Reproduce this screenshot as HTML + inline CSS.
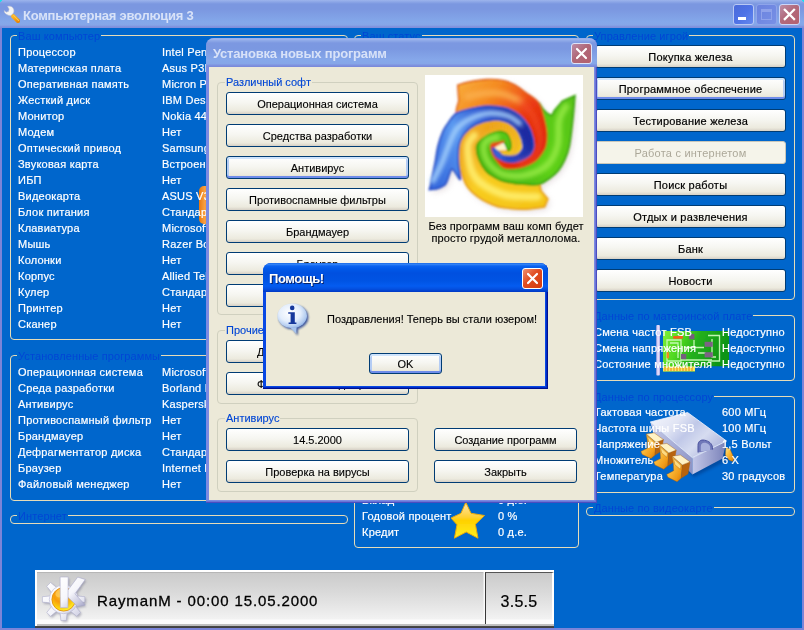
<!DOCTYPE html>
<html lang="ru">
<head>
<meta charset="utf-8">
<title>Компьютерная эволюция 3</title>
<style>
*{box-sizing:border-box;margin:0;padding:0}
html,body{width:804px;height:630px;overflow:hidden;background:#0066cc}
body{font-family:"Liberation Sans",sans-serif;font-size:11px;color:#000;position:relative}
.abs{position:absolute}
/* main window */
#main{will-change:transform;position:absolute;left:0;top:0;width:804px;height:630px;background:#7b84d8;overflow:hidden}
#mtitle{position:absolute;left:0;top:0;width:804px;height:28px;
 background:linear-gradient(#9db4ec 0,#8ba5e6 2px,#7b97e0 4px,#7b97e0 9px,#84a8ea 22px,#86a6e8 25px,#7f8fdc 27px,#7f8fdc 28px)}
#mtitle .cap{position:absolute;left:23px;top:8px;font-weight:bold;font-size:13px;line-height:15px;color:#d8e2f8;white-space:nowrap;letter-spacing:-.25px}
#mbody{position:absolute;left:2px;top:28px;width:800px;height:600px;background:#0066cc;overflow:hidden}
.tbtn{position:absolute;top:4px;width:21px;height:21px;border:1px solid #b8c8f4;border-radius:3px}
/* group boxes on blue */
.gb{position:absolute;border:1px solid #e6dcb8;border-radius:4px}
.gbl{position:absolute;top:-7px;left:6px;padding:0 1px;background:#0066cc;color:#0046d5;font-size:11px;line-height:14px;white-space:nowrap;letter-spacing:.1px}
.row{-webkit-text-stroke:.2px #fff;position:absolute;color:#fff;font-size:11px;line-height:16px;white-space:nowrap;letter-spacing:.22px}
/* xp buttons */
.btn{position:absolute;height:23px;border:1px solid #003c74;border-radius:3px;
 background:linear-gradient(#ffffff 0,#f6f6f1 45%,#eceade 85%,#d6d0c5 100%);
 font-size:11px;line-height:23px;text-align:center;white-space:nowrap;color:#000}
.btn.def{box-shadow:inset 0 2px 0 #cfe4fc,inset 0 -2px 0 #6f8cea,inset 2px 0 0 #b4ccf4,inset -2px 0 0 #b4ccf4}
.btn.dis{border-color:#c9c7ba;background:#f5f4ea;color:#aca899;-webkit-text-stroke:0 !important}
.btn.cs{-webkit-text-stroke:.2px #000;font-size:11px;letter-spacing:.22px;line-height:23px}
/* dialogs */
.dlg{position:absolute;overflow:hidden;-webkit-text-stroke:.12px #000}

/* status bar */
#sb{position:absolute;left:33px;top:542px;width:519px;height:58px;background:linear-gradient(#ffffff 0,#ffffff 1.5px,#b6b6b6 1.5px,#b6b6b6 2.6px,#cbcbcb 3px,#d6d6d6 18px,#e4e4e4 34px,#f2f2f2 49px,#fcfcfc 50px,#fcfcfc 54px,#c2c2c2 54px,#bcbcbc 56px,#484848 56px,#404040 57.6px,#7b84d8 57.6px)}
#sb .lw{position:absolute;left:0;top:0;width:2px;height:56px;background:#fff}
#sb .nm{position:absolute;left:62px;top:22px;font-size:15px;line-height:18px;letter-spacing:.88px;white-space:nowrap;color:#000;-webkit-text-stroke:.3px #000}
#sb .p2{position:absolute;left:450px;top:2px;width:69px;height:52px;border-left:1.5px solid #383838;border-top:1px solid #555;border-right:2px solid #fff;box-shadow:-1.5px 0 0 #fafafa}
#sb .ver{position:absolute;left:450px;top:23px;-webkit-text-stroke:.2px #000;width:68px;text-align:center;font-size:16px;line-height:18px;letter-spacing:.3px;color:#000}
/* dialogs */
.d1{left:204px;top:10px;width:391px;height:465px;border-radius:8px 8px 0 0;background:#7c8ae2;box-shadow:inset -1px -1px 0 #4c4cc0,inset -2px -2px 0 #6a76d6}
.d1 .tb{position:absolute;z-index:1;left:0;top:0;width:100%;height:29px;background:linear-gradient(#8ea8e8 0,#a0b6ee 1px,#90aae8 2.5px,#7c98e1 5px,#7b98e1 11px,#86a8ea 22px,#86a6e8 25.5px,#7c8cdc 28px,#7888d8 29px)}
.d1 .cap{-webkit-text-stroke:0;position:absolute;left:7px;top:8px;font-weight:bold;font-size:13px;line-height:15px;color:#d8e2f8;white-space:nowrap;letter-spacing:-.2px}
.d1 .bd{position:absolute;left:3px;top:28px;width:385px;height:434px;background:#ece9d8}
.xbtn{position:absolute;width:21px;height:21px;border:1px solid #fff;border-radius:3px}
.ggb{position:absolute;border:1px solid #d0d0bf;border-radius:4px}
.ggl{-webkit-text-stroke:.12px #0046d5;position:absolute;top:-8px;left:7px;padding:0 1px;background:#ece9d8;color:#0046d5;font-size:11px;line-height:14px;white-space:nowrap}
.d2{left:261px;top:235px;width:285px;height:126px;border-radius:8px 8px 0 0;background:#0848e4;box-shadow:inset -1px -1px 0 #001090,inset -2px -2px 0 #002cc4}
.d2 .tb{position:absolute;left:0;top:0;width:100%;height:29px;background:linear-gradient(#0a5ae0 0,#3a8af8 1px,#0a62f0 3px,#0058e8 6px,#0050e0 10px,#0054e4 18px,#045cf0 23px,#0450e0 26px,#0038c4 29px)}
.d2 .cap{-webkit-text-stroke:0;position:absolute;left:6px;top:8px;font-weight:bold;font-size:13px;line-height:15px;color:#fff;white-space:nowrap;letter-spacing:-.45px;text-shadow:1px 1px 0 #0a246a}
.d2 .bd{position:absolute;left:3px;top:29px;width:279px;height:94px;background:#ece9d8}
</style>
</head>
<body>
<div id="main">
 <div id="mtitle"><div class="cap">Компьютерная эволюция 3</div>
<!--TB-->
<svg class="abs" style="left:3px;top:5px" width="18" height="18" viewBox="0 0 18 18"><defs><linearGradient id="wh" x1="0" y1="0" x2="1" y2="1"><stop offset="0" stop-color="#ffb420"/><stop offset=".5" stop-color="#f8a010"/><stop offset="1" stop-color="#e88808"/></linearGradient><filter id="wbl"><feGaussianBlur stdDeviation=".35"/></filter></defs>
<g filter="url(#wbl)"><path d="M10.2 11.2L15 16" stroke="url(#wh)" stroke-width="4.2" stroke-linecap="round"/><path d="M10.2 11.2L15 16" stroke="#ffc848" stroke-width="1.2" stroke-linecap="round" transform="translate(.5,-.6)"/>
<path d="M4.6 1.4C7 .6 9.8 1.6 10.6 4.2C11.2 6.2 10.6 7.6 10 8.4L8 10.4C5.4 10.6 3 9.6 1.6 7.6L1.2 5.6L3.2 7.2L5.6 6.4L6.2 4L4.6 1.4Z" fill="#f4f4f4" stroke="#c8c8d0" stroke-width=".5"/></g></svg>
<div class="tbtn" style="left:733px;background:linear-gradient(135deg,#4a6ada,#4e72e6 50%,#6488ee)"><div class="abs" style="left:4px;top:12px;width:8px;height:3px;background:#fff"></div></div>
<div class="tbtn" style="left:756px;background:linear-gradient(135deg,#6a82de,#7890e6);border-color:#8ea4ea"><div class="abs" style="left:4px;top:4px;width:11px;height:11px;border:1px solid #8fa2ea;border-top-width:3px"></div></div>
<div class="tbtn" style="left:779px;background:linear-gradient(135deg,#bc8ea8,#b26a7c 45%,#b4606e);border-color:#ccd6f8"><svg width="19" height="19" viewBox="0 0 19 19" class="abs" style="left:0;top:0"><path d="M4.8 4.8L14 14M14 4.8L4.8 14" stroke="#fff" stroke-width="2.3" stroke-linecap="square"/></svg></div>
<div class="abs" style="left:0;top:0;width:2px;height:1px;background:#18e0f0"></div><div class="abs" style="left:0;top:1px;width:1px;height:1px;background:#18e0f0"></div>
<div class="abs" style="left:802px;top:0;width:2px;height:1px;background:#18e0f0"></div><div class="abs" style="left:803px;top:1px;width:1px;height:1px;background:#18e0f0"></div>
<!--/TB-->
</div>
 <div id="mbody">
<!--MB-->
<!--ICONS-->
<svg class="abs" style="left:446px;top:472px" width="40" height="40" viewBox="0 0 40 40"><defs><linearGradient id="st" x1="0" y1="0" x2="0" y2="1"><stop offset="0" stop-color="#ffc850"/><stop offset=".12" stop-color="#ffe090"/><stop offset=".42" stop-color="#ffd030"/><stop offset=".5" stop-color="#ffd000"/><stop offset="1" stop-color="#fff020"/></linearGradient><filter id="sbl"><feGaussianBlur stdDeviation=".5"/></filter></defs>
<path filter="url(#sbl)" d="M17.8 2.2L23 13.3L36.5 15.5L27.4 24.3L30 38.2L18.2 32L6.4 38.2L9 24.7L3 18L13 13.3Z" fill="url(#st)" stroke="#e8a808" stroke-width="1" stroke-linejoin="round"/></svg>
<div class="abs" style="left:197px;top:158px;width:14px;height:38px;border-radius:5px;background:linear-gradient(90deg,#e87810,#f8a040 40%,#f08820)"></div>
<svg class="abs" style="left:652px;top:295px" width="80" height="56" viewBox="0 0 80 56"><defs>
<linearGradient id="pg" x1="0" y1="0" x2="1" y2=".25"><stop offset="0" stop-color="#80f038"/><stop offset=".3" stop-color="#50d820"/><stop offset=".55" stop-color="#24b01c"/><stop offset="1" stop-color="#0e9416"/></linearGradient>
<linearGradient id="pbk" x1="0" y1="0" x2="1" y2="0"><stop offset="0" stop-color="#a8a0e0"/><stop offset=".5" stop-color="#eeeaff"/><stop offset="1" stop-color="#b0a8e4"/></linearGradient>
<filter id="pbl"><feGaussianBlur stdDeviation=".45"/></filter></defs>
<g filter="url(#pbl)">
<rect x="2.2" y="2" width="3.8" height="50.5" rx="1" fill="url(#pbk)"/>
<path d="M9 8H75V43.2H41V48.4H9Z" fill="url(#pg)"/>
<rect x="9" y="43.4" width="32" height="5" fill="#f4ec60"/>
<path d="M11 44V48M14 44V48M17 44V48M20 44V48M23 44V48M26 44V48M29 44V48M32 44V48M35 44V48M38 44V48" stroke="#f09028" stroke-width="1.2"/>
<g fill="none" stroke="#c8fab8" stroke-width="1.3" opacity=".95"><path d="M13 17H27V38H13Z"/><path d="M16 20H24V35"/><path d="M30 24.5H50M27 37H58"/><path d="M54 12.5H65.5V38H54"/><path d="M58 16V34H62"/><path d="M40 17V24M44 30H52"/></g>
<rect x="35" y="11" width="5.4" height="5.2" fill="#74607c"/><rect x="50.6" y="18.8" width="8.2" height="5" fill="#7c6484"/><rect x="50.6" y="29.2" width="8.2" height="5.2" fill="#7c6484"/><rect x="27" y="31" width="5.2" height="5.2" fill="#74607c"/>
<rect x="19" y="13" width="10" height="2.8" rx="1" fill="#f0601c"/><rect x="12.6" y="29" width="2.4" height="6.6" rx="1" fill="#f08820"/>
</g></svg>
<svg class="abs" style="left:638px;top:377px" width="100" height="84" viewBox="0 0 100 84"><defs>
<linearGradient id="ct" x1="0" y1="0" x2="1" y2=".6"><stop offset="0" stop-color="#f6f8fe"/><stop offset=".35" stop-color="#e0e4f4"/><stop offset=".55" stop-color="#c0c8e8"/><stop offset=".75" stop-color="#d6dcf0"/><stop offset="1" stop-color="#b0b8de"/></linearGradient>
<linearGradient id="cr" x1="0" y1="0" x2="1" y2="0"><stop offset="0" stop-color="#c4c8e8"/><stop offset="1" stop-color="#7880b8"/></linearGradient>
<linearGradient id="cl" x1="0" y1="0" x2="1" y2="1"><stop offset="0" stop-color="#c8cce8"/><stop offset="1" stop-color="#8890c4"/></linearGradient>
<linearGradient id="cp" x1="0" y1="0" x2="1" y2="1"><stop offset="0" stop-color="#fff0a0"/><stop offset=".35" stop-color="#fcc040"/><stop offset=".75" stop-color="#f09a18"/><stop offset="1" stop-color="#c47008"/></linearGradient>
<filter id="cbl"><feGaussianBlur stdDeviation=".55"/></filter>
<filter id="csh" x="-20%" y="-20%" width="140%" height="140%"><feGaussianBlur stdDeviation="1.6"/></filter></defs>
<path d="M16 36L54 72L88 55L84 40Z" fill="#002a70" opacity=".45" filter="url(#csh)"/>
<g filter="url(#cbl)">
<path d="M10.3 17L14 31L52.4 69.4L52.4 52.7Z" fill="url(#cl)"/>
<path d="M52.4 52.7L86.5 36L82.5 53.5L52.4 69.4Z" fill="url(#cr)"/>
<path d="M10.3 17L47.6 7.5L86.5 36L52.4 52.7Z" fill="url(#ct)" stroke="#f4f6ff" stroke-width=".8"/>
<path d="M58 47.5V40.5C58 36.5 60.5 34.4 64.5 35.2C69 36 72 38.6 72.4 42.2L72.6 44.6" fill="#7078b8" stroke="#4c54a0" stroke-width="1"/>
<path d="M60.8 46.2V41.4C60.8 38.4 62.8 37.2 65.4 37.8C68.4 38.4 70 40.2 70.2 42.4V45.6" fill="#a8b0dc"/>
<g stroke="#a85c08" stroke-width=".4" stroke-linejoin="round"><path d="M86 42.5L90 44L94.2 53.5L92.6 56.4L89 55L85.4 50Z" fill="url(#cp)"/><path d="M6.2 29.1L16.0 37.4L15.1 50.1L11.0 53.6L2.2 49.4L0.9 46.5L7.7 43.0L7.3 35.3Z" fill="url(#cp)"/><path d="M16.0 37.4L23.4 34.6L21.5 46.1L15.1 50.1Z" fill="#b8640c"/><path d="M6.2 29.1L14.1 27.8L23.4 34.6L16.0 37.4Z" fill="#fff2c4"/><path d="M7.5 31.4L14.7 38.0L14.1 41.7L8.9 37.3Z" fill="#ffe08a" opacity=".9"/><path d="M19.0 39.6L28.8 48.0L27.9 60.7L23.8 64.2L15.0 60.0L13.7 57.1L20.5 53.6L20.1 45.9Z" fill="url(#cp)"/><path d="M28.8 48.0L36.2 45.1L34.3 56.7L27.9 60.7Z" fill="#b8640c"/><path d="M19.0 39.6L26.9 38.4L36.2 45.1L28.8 48.0Z" fill="#fff2c4"/><path d="M20.3 42.0L27.5 48.6L26.9 52.3L21.7 47.9Z" fill="#ffe08a" opacity=".9"/><path d="M32.2 51.2L42.3 59.9L41.4 73.0L37.1 76.7L28.0 72.3L26.7 69.4L33.7 65.7L33.3 57.7Z" fill="url(#cp)"/><path d="M42.3 59.9L50.0 56.9L48.0 68.9L41.4 73.0Z" fill="#b8640c"/><path d="M32.2 51.2L40.4 50.0L50.0 56.9L42.3 59.9Z" fill="#fff2c4"/><path d="M33.6 53.6L41.0 60.5L40.4 64.3L34.9 59.8Z" fill="#ffe08a" opacity=".9"/></g></svg>
<!--/ICONS-->
<div class="gb" style="left:8px;top:7px;width:338px;height:305px"><span class="gbl">Ваш компьютер</span></div>
<div class="row" style="left:16px;top:16px">Процессор</div>
<div class="row" style="left:160px;top:16px">Intel Pentium III</div>
<div class="row" style="left:16px;top:32px">Материнская плата</div>
<div class="row" style="left:160px;top:32px">Asus P3B-F</div>
<div class="row" style="left:16px;top:48px">Оперативная память</div>
<div class="row" style="left:160px;top:48px">Micron PC100</div>
<div class="row" style="left:16px;top:64px">Жесткий диск</div>
<div class="row" style="left:160px;top:64px">IBM Deskstar</div>
<div class="row" style="left:16px;top:80px">Монитор</div>
<div class="row" style="left:160px;top:80px">Nokia 447Za</div>
<div class="row" style="left:16px;top:96px">Модем</div>
<div class="row" style="left:160px;top:96px">Нет</div>
<div class="row" style="left:16px;top:112px">Оптический привод</div>
<div class="row" style="left:160px;top:112px">Samsung SC-148</div>
<div class="row" style="left:16px;top:128px">Звуковая карта</div>
<div class="row" style="left:160px;top:128px">Встроенная</div>
<div class="row" style="left:16px;top:144px">ИБП</div>
<div class="row" style="left:160px;top:144px">Нет</div>
<div class="row" style="left:16px;top:160px">Видеокарта</div>
<div class="row" style="left:160px;top:160px">ASUS V3800</div>
<div class="row" style="left:16px;top:176px">Блок питания</div>
<div class="row" style="left:160px;top:176px">Стандартный</div>
<div class="row" style="left:16px;top:192px">Клавиатура</div>
<div class="row" style="left:160px;top:192px">Microsoft</div>
<div class="row" style="left:16px;top:208px">Мышь</div>
<div class="row" style="left:160px;top:208px">Razer Boomslang</div>
<div class="row" style="left:16px;top:224px">Колонки</div>
<div class="row" style="left:160px;top:224px">Нет</div>
<div class="row" style="left:16px;top:240px">Корпус</div>
<div class="row" style="left:160px;top:240px">Allied Telesyn</div>
<div class="row" style="left:16px;top:256px">Кулер</div>
<div class="row" style="left:160px;top:256px">Стандартный</div>
<div class="row" style="left:16px;top:272px">Принтер</div>
<div class="row" style="left:160px;top:272px">Нет</div>
<div class="row" style="left:16px;top:288px">Сканер</div>
<div class="row" style="left:160px;top:288px">Нет</div>
<div class="gb" style="left:8px;top:327px;width:338px;height:146px"><span class="gbl">Установленные программы</span></div>
<div class="row" style="left:16px;top:336px">Операционная система</div>
<div class="row" style="left:160px;top:336px">Microsoft Windows</div>
<div class="row" style="left:16px;top:352px">Среда разработки</div>
<div class="row" style="left:160px;top:352px">Borland Delphi</div>
<div class="row" style="left:16px;top:368px">Антивирус</div>
<div class="row" style="left:160px;top:368px">Kaspersky</div>
<div class="row" style="left:16px;top:384px">Противоспамный фильтр</div>
<div class="row" style="left:160px;top:384px">Нет</div>
<div class="row" style="left:16px;top:400px">Брандмауер</div>
<div class="row" style="left:160px;top:400px">Нет</div>
<div class="row" style="left:16px;top:416px">Дефрагментатор диска</div>
<div class="row" style="left:160px;top:416px">Стандартный</div>
<div class="row" style="left:16px;top:432px">Браузер</div>
<div class="row" style="left:160px;top:432px">Internet Explorer</div>
<div class="row" style="left:16px;top:448px">Файловый менеджер</div>
<div class="row" style="left:160px;top:448px">Нет</div>
<div class="gb" style="left:8px;top:487px;width:338px;height:9px"><span class="gbl">Интернет</span></div>
<div class="gb" style="left:352px;top:7px;width:225px;height:513px"><span class="gbl">Ваш статус</span></div>
<div class="row" style="left:360px;top:480px">Годовой процент</div>
<div class="row" style="left:496px;top:480px">0 %</div>
<div class="row" style="left:360px;top:496px">Кредит</div>
<div class="row" style="left:496px;top:496px">0 д.е.</div>
<div class="row" style="left:360px;top:464px">Вклад</div>
<div class="row" style="left:496px;top:464px">0 д.е.</div>
<div class="gb" style="left:584px;top:7px;width:209px;height:265px"><span class="gbl">Управление игрой</span></div>
<div class="btn cs" style="left:593px;top:17px;width:191px">Покупка железа</div>
<div class="btn cs def" style="left:593px;top:49px;width:191px">Программное обеспечение</div>
<div class="btn cs" style="left:593px;top:81px;width:191px">Тестирование железа</div>
<div class="btn cs dis" style="left:593px;top:113px;width:191px">Работа с интернетом</div>
<div class="btn cs" style="left:593px;top:145px;width:191px">Поиск работы</div>
<div class="btn cs" style="left:593px;top:177px;width:191px">Отдых и развлечения</div>
<div class="btn cs" style="left:593px;top:209px;width:191px">Банк</div>
<div class="btn cs" style="left:593px;top:241px;width:191px">Новости</div>
<div class="gb" style="left:584px;top:287px;width:209px;height:66px"><span class="gbl">Данные по материнской плате</span></div>
<div class="row" style="left:592px;top:296px">Смена частот FSB</div>
<div class="row" style="left:720px;top:296px">Недоступно</div>
<div class="row" style="left:592px;top:312px">Смена напряжения</div>
<div class="row" style="left:720px;top:312px">Недоступно</div>
<div class="row" style="left:592px;top:328px">Состояние множителя</div>
<div class="row" style="left:720px;top:328px">Недоступно</div>
<div class="gb" style="left:584px;top:368px;width:209px;height:97px"><span class="gbl">Данные по процессору</span></div>
<div class="row" style="left:592px;top:376px">Тактовая частота</div>
<div class="row" style="left:720px;top:376px">600 МГц</div>
<div class="row" style="left:592px;top:392px">Частота шины FSB</div>
<div class="row" style="left:720px;top:392px">100 МГц</div>
<div class="row" style="left:592px;top:408px">Напряжение</div>
<div class="row" style="left:720px;top:408px">1,5 Вольт</div>
<div class="row" style="left:592px;top:424px">Множитель</div>
<div class="row" style="left:720px;top:424px">6 X</div>
<div class="row" style="left:592px;top:440px">Температура</div>
<div class="row" style="left:720px;top:440px">30 градусов</div>
<div class="gb" style="left:584px;top:479px;width:209px;height:9px"><span class="gbl">Данные по видеокарте</span></div>
<!--/MB-->
<!--SB-->
<div id="sb"><div class="lw"></div><div class="nm">RaymanM - 00:00 15.05.2000</div><div class="p2"></div><div class="ver">3.5.5</div></div>
<!--KDE--><svg class="abs" style="left:36px;top:544px" width="54" height="56" viewBox="0 0 54 56"><defs>
<radialGradient id="kb" cx=".4" cy=".3" r=".8"><stop offset="0" stop-color="#ffc030"/><stop offset=".4" stop-color="#f89c08"/><stop offset=".7" stop-color="#fcd010"/><stop offset=".92" stop-color="#fff838"/><stop offset="1" stop-color="#ffffc0"/></radialGradient>
<linearGradient id="kg" x1="0" y1="0" x2="1" y2="1"><stop offset="0" stop-color="#ffffff"/><stop offset=".65" stop-color="#f0f0f8"/><stop offset="1" stop-color="#c0c0d8"/></linearGradient>
<linearGradient id="kk" gradientUnits="userSpaceOnUse" x1="22" y1="5" x2="48" y2="34"><stop offset="0" stop-color="#ffffff"/><stop offset=".5" stop-color="#f6f6fb"/><stop offset=".8" stop-color="#c8c8de"/><stop offset="1" stop-color="#a0a0c4"/></linearGradient>
<filter id="kbl"><feGaussianBlur stdDeviation=".45"/></filter>
<filter id="ksh" x="-20%" y="-20%" width="140%" height="140%"><feGaussianBlur stdDeviation="1.2"/></filter></defs>
<g filter="url(#ksh)" opacity=".38" fill="#505070" transform="translate(1.4,1.6)"><path d="M38.6 23.9L46.8 24.7L46.8 30.1L38.6 30.9ZM37.3 34.1L42.5 40.5L38.7 44.3L32.3 39.1ZM29.1 40.4L28.3 48.6L22.9 48.6L22.1 40.4ZM18.9 39.1L12.5 44.3L8.7 40.5L13.9 34.1ZM12.6 30.9L4.4 30.1L4.4 24.7L12.6 23.9ZM13.9 20.7L8.7 14.3L12.5 10.5L18.9 15.7ZM22.1 14.4L22.9 6.2L28.3 6.2L29.1 14.4ZM32.3 15.7L38.7 10.5L42.5 14.3L37.3 20.7Z"/><circle cx="25.6" cy="27.4" r="14.4"/><path d="M22 5.2H30V35.6H22ZM30 17L39.6 5.2L47 7.4L36.4 21.4L47 33L39.6 34.4L30 23Z"/></g>
<g filter="url(#kbl)">
<path d="M38.6 23.9L46.8 24.7L46.8 30.1L38.6 30.9ZM37.3 34.1L42.5 40.5L38.7 44.3L32.3 39.1ZM29.1 40.4L28.3 48.6L22.9 48.6L22.1 40.4ZM18.9 39.1L12.5 44.3L8.7 40.5L13.9 34.1ZM12.6 30.9L4.4 30.1L4.4 24.7L12.6 23.9ZM13.9 20.7L8.7 14.3L12.5 10.5L18.9 15.7ZM22.1 14.4L22.9 6.2L28.3 6.2L29.1 14.4ZM32.3 15.7L38.7 10.5L42.5 14.3L37.3 20.7Z" fill="url(#kg)" stroke="#aeaecc" stroke-width=".6"/>
<circle cx="25.6" cy="27.4" r="14.3" fill="url(#kg)" stroke="#b4b4d0" stroke-width=".6"/>
<circle cx="25.6" cy="27.4" r="11.7" fill="url(#kb)" stroke="#e08808" stroke-width=".8"/>
<ellipse cx="22.4" cy="21" rx="5.4" ry="4" fill="#ffd878" opacity=".55" transform="rotate(-35 22.4 21)"/>
<path d="M29.6 18.6L39.7 5.1L47.3 7.5L36.9 21.9L47.3 33L39.7 34.5L29.6 25Z" fill="url(#kk)" stroke="#a4a4c6" stroke-width=".6" stroke-linejoin="round"/>
<path d="M22.1 5L30.2 5L29.9 35.7L22.4 35.7Z" fill="url(#kk)" stroke="#b0b0cc" stroke-width=".6" stroke-linejoin="round"/>
</g></svg><!--/KDE-->
<!--/SB-->
<!--D1-->
<div class="dlg d1">
 <div class="tb"><div class="cap">Установка новых программ</div>
  <div class="xbtn" style="left:365px;top:5px;border-color:#dde3f8;background:linear-gradient(135deg,#bc8ca8,#b06878 45%,#b4606e)"><svg width="19" height="19" viewBox="0 0 19 19" style="position:absolute;left:0;top:0"><path d="M5 5L14 14M14 5L5 14" stroke="#fff" stroke-width="2.2" stroke-linecap="round"/></svg></div>
 </div>
 <div class="bd" id="d1bd">
<div class="ggb" style="left:8px;top:16px;width:201px;height:233px"><span class="ggl">Различный софт</span></div>
<div class="btn" style="left:17px;top:26px;width:183px">Операционная система</div>
<div class="btn" style="left:17px;top:58px;width:183px">Средства разработки</div>
<div class="btn def" style="left:17px;top:90px;width:183px">Антивирус</div>
<div class="btn" style="left:17px;top:122px;width:183px">Противоспамные фильтры</div>
<div class="btn" style="left:17px;top:154px;width:183px">Брандмауер</div>
<div class="btn" style="left:17px;top:186px;width:183px">Браузер</div>
<div class="btn" style="left:17px;top:218px;width:183px">Оболочка</div>
<div class="ggb" style="left:8px;top:264px;width:201px;height:74px"><span class="ggl">Прочие программы</span></div>
<div class="btn" style="left:17px;top:274px;width:183px;text-align:left;padding-left:30px">Дефрагментатор диска</div>
<div class="btn" style="left:17px;top:306px;width:183px;text-align:left;padding-left:30px">Файловый менеджер</div>
<div class="ggb" style="left:8px;top:352px;width:201px;height:74px"><span class="ggl">Антивирус</span></div>
<div class="btn" style="left:17px;top:362px;width:183px">14.5.2000</div>
<div class="btn" style="left:17px;top:394px;width:183px">Проверка на вирусы</div>
<div class="btn" style="left:225px;top:362px;width:143px">Создание программ</div>
<div class="btn" style="left:225px;top:394px;width:143px">Закрыть</div>
<div class="abs" id="logo" style="left:216px;top:9px;width:158px;height:142px;background:#fff"><!--LOGO--><svg width="158" height="142" viewBox="0 0 701 630" style="position:absolute;left:0;top:0"><defs><filter id="lb" x="-10%" y="-10%" width="120%" height="120%"><feGaussianBlur stdDeviation="5"/></filter><filter id="lb2" x="-20%" y="-20%" width="140%" height="140%"><feGaussianBlur stdDeviation="14"/></filter><filter id="lb3" x="-20%" y="-20%" width="140%" height="140%"><feGaussianBlur stdDeviation="9"/></filter><linearGradient id="go" gradientUnits="userSpaceOnUse" x1="150" y1="60" x2="520" y2="380"><stop offset="0" stop-color="#f8a838"/><stop offset=".25" stop-color="#f48a20"/><stop offset=".45" stop-color="#f0601a"/><stop offset=".6" stop-color="#ea3a12"/><stop offset="1" stop-color="#dc1c0c"/></linearGradient><linearGradient id="gbl" gradientUnits="userSpaceOnUse" x1="40" y1="480" x2="430" y2="250"><stop offset="0" stop-color="#3468dc"/><stop offset=".45" stop-color="#5a98f0"/><stop offset=".75" stop-color="#3058d0"/><stop offset="1" stop-color="#1c2ca0"/></linearGradient><linearGradient id="gy" gradientUnits="userSpaceOnUse" x1="520" y1="560" x2="250" y2="260"><stop offset="0" stop-color="#f4c418"/><stop offset=".6" stop-color="#f8cc20"/><stop offset="1" stop-color="#f0a820"/></linearGradient><linearGradient id="gg" gradientUnits="userSpaceOnUse" x1="650" y1="120" x2="300" y2="400"><stop offset="0" stop-color="#58c418"/><stop offset=".6" stop-color="#5cd018"/><stop offset="1" stop-color="#48b410"/></linearGradient></defs><g filter="url(#lb2)" opacity=".35"><path d="M30 520C32 513 36 497 40 477C44 457 50 427 55 402C60 377 62 350 68 327C74 304 82 280 90 262C98 244 105 235 115 222C125 209 134 192 150 182C166 172 188 167 210 162C232 157 260 151 285 150C310 149 339 152 360 157C381 162 395 168 410 177C425 186 438 198 450 212C462 226 473 243 480 262C487 281 493 310 493 327C493 344 487 352 480 362C473 372 462 378 450 384C438 390 420 396 405 397C390 398 373 396 360 392C347 388 333 381 325 372C317 363 308 340 310 337C312 334 327 346 335 352C343 358 348 369 360 372C372 375 398 375 410 372C422 369 429 362 435 354C441 346 446 341 445 327C444 313 436 287 428 272C420 257 411 246 400 237C389 228 375 221 360 217C345 213 331 210 310 212C289 214 256 222 235 232C214 242 198 256 185 272C172 288 164 305 160 327C156 349 157 381 158 402C159 423 164 440 165 452C166 464 170 479 165 475C160 471 140 434 132 430C124 426 123 441 118 452C113 463 110 486 100 497C90 508 67 514 60 517Z" fill="#b8a0a8"/><path d="M155 57C164 54 188 46 210 42C232 38 260 33 285 32C310 31 339 33 360 37C381 41 393 48 410 57C427 66 442 79 460 92C478 105 502 117 515 137C528 157 534 190 540 212C546 234 549 253 550 272C551 291 548 313 545 327C542 341 538 346 530 357C522 368 513 382 500 392C487 402 467 411 450 417C433 423 415 426 400 427C385 428 371 428 360 424C349 420 343 412 335 402C327 392 316 380 310 367C304 354 300 336 300 327C300 318 304 315 310 312C316 309 327 311 335 310C343 309 364 302 360 307C356 312 316 326 310 337C304 348 317 363 325 372C333 381 347 388 360 392C373 396 390 398 405 397C420 396 438 390 450 384C462 378 473 372 480 362C487 352 493 344 493 327C493 310 487 281 480 262C473 243 462 226 450 212C438 198 425 186 410 177C395 168 381 162 360 157C339 152 310 149 285 150C260 151 232 157 210 162C188 167 158 188 150 182C142 176 158 136 160 127Z" fill="#b8a0a8"/><path d="M675 104C673 122 669 175 665 212C661 249 656 298 650 327C644 356 638 369 630 387C622 405 612 423 600 437C588 451 574 462 560 472C546 482 532 493 515 497C498 501 478 498 460 497C442 496 427 496 410 494C393 492 375 488 360 484C345 480 333 475 320 467C307 459 292 450 280 437C268 424 257 405 250 387C243 369 237 343 240 327C243 311 257 302 270 292C283 282 305 272 320 267C335 262 350 262 360 265C370 268 375 272 380 282C385 292 392 316 392 327C392 338 385 350 380 347C375 344 368 313 360 307C352 301 343 309 335 310C327 311 316 309 310 312C304 315 300 318 300 327C300 336 304 354 310 367C316 380 327 392 335 402C343 412 349 420 360 424C371 428 385 428 400 427C415 426 433 423 450 417C467 411 487 402 500 392C513 382 522 368 530 357C538 346 542 341 545 327C548 313 551 291 550 272C549 253 546 234 540 212C534 190 516 145 515 137C514 129 527 156 534 164C541 172 552 182 558 186C564 190 568 193 573 190C578 187 578 178 586 168C594 158 614 135 620 128Z" fill="#b8a0a8"/><path d="M540 597C527 599 490 606 460 607C430 608 385 603 360 600C335 597 329 595 310 587C291 579 264 566 245 552C226 538 208 523 195 502C182 481 171 444 165 427C159 410 159 419 158 402C157 385 156 349 160 327C164 305 172 288 185 272C198 256 214 242 235 232C256 222 289 214 310 212C331 210 345 213 360 217C375 221 389 228 400 237C411 246 420 257 428 272C436 287 444 313 445 327C446 341 441 346 435 354C429 362 422 369 410 372C398 375 372 375 360 372C348 369 332 356 335 352C338 348 370 351 380 347C390 343 392 338 392 327C392 316 385 292 380 282C375 272 370 268 360 265C350 262 335 262 320 267C305 272 283 282 270 292C257 302 243 311 240 327C237 343 243 369 250 387C257 405 268 424 280 437C292 450 307 459 320 467C333 475 345 480 360 484C375 488 393 492 410 494C427 496 442 496 460 497C478 498 504 492 515 497C526 502 518 516 525 527C532 538 550 556 555 562Z" fill="#b8a0a8"/></g><g filter="url(#lb)"><circle cx="335" cy="328" r="22" fill="#fff6c8"/><path d="M530 585C517 587 480 594 450 595C420 596 375 591 350 588C325 585 319 583 300 575C281 567 254 554 235 540C216 526 198 511 185 490C172 469 161 432 155 415C149 398 149 407 148 390C147 373 146 337 150 315C154 293 162 276 175 260C188 244 204 230 225 220C246 210 279 202 300 200C321 198 335 201 350 205C365 209 379 216 390 225C401 234 410 245 418 260C426 275 434 301 435 315C436 329 431 334 425 342C419 350 412 357 400 360C388 363 362 363 350 360C338 357 322 344 325 340C328 336 360 339 370 335C380 331 382 326 382 315C382 304 375 280 370 270C365 260 360 256 350 253C340 250 325 250 310 255C295 260 273 270 260 280C247 290 233 299 230 315C227 331 233 357 240 375C247 393 258 412 270 425C282 438 297 447 310 455C323 463 335 468 350 472C365 476 383 480 400 482C417 484 432 484 450 485C468 486 494 480 505 485C516 490 508 504 515 515C522 526 540 544 545 550Z" fill="url(#gy)" stroke="#eaa018" stroke-width="8"/><path d="M665 92C663 110 659 163 655 200C651 237 646 286 640 315C634 344 628 357 620 375C612 393 602 411 590 425C578 439 564 450 550 460C536 470 522 481 505 485C488 489 468 486 450 485C432 484 417 484 400 482C383 480 365 476 350 472C335 468 323 463 310 455C297 447 282 438 270 425C258 412 247 393 240 375C233 357 227 331 230 315C233 299 247 290 260 280C273 270 295 260 310 255C325 250 340 250 350 253C360 256 365 260 370 270C375 280 382 304 382 315C382 326 375 338 370 335C365 332 358 301 350 295C342 289 333 297 325 298C317 299 306 297 300 300C294 303 290 306 290 315C290 324 294 342 300 355C306 368 317 380 325 390C333 400 339 408 350 412C361 416 375 416 390 415C405 414 423 411 440 405C457 399 477 390 490 380C503 370 512 356 520 345C528 334 532 329 535 315C538 301 541 279 540 260C539 241 536 222 530 200C524 178 506 133 505 125C504 117 517 144 524 152C531 160 542 170 548 174C554 178 558 181 563 178C568 175 568 166 576 156C584 146 604 123 610 116Z" fill="url(#gg)" stroke="#3aa410" stroke-width="8"/><path d="M145 45C154 42 178 34 200 30C222 26 250 21 275 20C300 19 329 21 350 25C371 29 383 36 400 45C417 54 432 67 450 80C468 93 492 105 505 125C518 145 524 178 530 200C536 222 539 241 540 260C541 279 538 301 535 315C532 329 528 334 520 345C512 356 503 370 490 380C477 390 457 399 440 405C423 411 405 414 390 415C375 416 361 416 350 412C339 408 333 400 325 390C317 380 306 368 300 355C294 342 290 324 290 315C290 306 294 303 300 300C306 297 317 299 325 298C333 297 354 290 350 295C346 300 306 314 300 325C294 336 307 351 315 360C323 369 337 376 350 380C363 384 380 386 395 385C410 384 428 378 440 372C452 366 463 360 470 350C477 340 483 332 483 315C483 298 477 269 470 250C463 231 452 214 440 200C428 186 415 174 400 165C385 156 371 150 350 145C329 140 300 137 275 138C250 139 222 145 200 150C178 155 148 176 140 170C132 164 148 124 150 115Z" fill="url(#go)" stroke="#e05a18" stroke-width="6"/><path d="M20 508C22 501 26 485 30 465C34 445 40 415 45 390C50 365 52 338 58 315C64 292 72 268 80 250C88 232 95 223 105 210C115 197 124 180 140 170C156 160 178 155 200 150C222 145 250 139 275 138C300 137 329 140 350 145C371 150 385 156 400 165C415 174 428 186 440 200C452 214 463 231 470 250C477 269 483 298 483 315C483 332 477 340 470 350C463 360 452 366 440 372C428 378 410 384 395 385C380 386 363 384 350 380C337 376 323 369 315 360C307 351 298 328 300 325C302 322 317 334 325 340C333 346 338 357 350 360C362 363 388 363 400 360C412 357 419 350 425 342C431 334 436 329 435 315C434 301 426 275 418 260C410 245 401 234 390 225C379 216 365 209 350 205C335 201 321 198 300 200C279 202 246 210 225 220C204 230 188 244 175 260C162 276 154 293 150 315C146 337 147 369 148 390C149 411 154 428 155 440C156 452 160 467 155 463C150 459 130 422 122 418C114 414 113 429 108 440C103 451 100 474 90 485C80 496 57 502 50 505Z" fill="url(#gbl)" stroke="#2a50c8" stroke-width="8"/></g><g filter="url(#lb3)" fill="none" stroke-linecap="round"><path d="M35 470C42 457 64 416 75 390C86 364 93 340 104 315C115 290 124 260 140 240C156 220 175 207 200 195C225 183 260 172 288 170C316 168 348 174 370 182C392 190 412 210 420 215" stroke="#a4d0fc" stroke-width="24" opacity=".9"/><path d="M440 240C443 252 457 298 458 315C459 332 451 337 445 345C439 353 434 360 420 364C406 368 370 369 360 370" stroke="#1c2ca8" stroke-width="18" opacity=".55"/><path d="M190 95C204 92 248 82 275 80C302 78 326 79 350 85C374 91 408 110 420 115" stroke="#fbb050" stroke-width="32" opacity=".75"/><path d="M420 115C428 123 457 146 470 165C483 184 493 209 500 230C507 251 512 271 512 290C512 309 505 330 497 345C489 360 478 370 465 378C452 386 428 392 420 395" stroke="#f45028" stroke-width="22" opacity=".55"/><path d="M625 140C620 150 601 171 595 200C589 229 597 281 588 315C579 349 564 380 540 402C516 424 477 438 445 445C413 452 375 448 350 442C325 436 311 421 297 408C283 395 274 380 268 365C262 350 258 328 260 315C262 302 270 294 280 288C290 282 312 278 318 276" stroke="#98ec48" stroke-width="30" opacity=".8"/><path d="M500 540C492 540 475 542 450 540C425 538 383 540 350 530C317 520 276 500 252 482C228 464 215 448 205 420C195 392 188 340 190 315C192 290 213 276 218 268" stroke="#fff070" stroke-width="34" opacity=".85"/><path d="M268 236C278 234 306 224 325 226C344 228 366 234 380 246C394 258 406 284 408 300C410 316 397 333 395 340" stroke="#e89c10" stroke-width="18" opacity=".55"/></g></svg><!--/LOGO--></div>
<div class="abs" style="left:207px;top:154px;width:180px;text-align:center;line-height:12px;white-space:nowrap;letter-spacing:.06px">Без программ ваш комп будет<br>просто грудой металлолома.</div>
 </div>
</div>
<!--/D1-->
<!--D2-->
<div class="dlg d2">
 <div class="tb"><div class="cap">Помощь!</div>
  <div class="xbtn" style="left:259px;top:5px;background:linear-gradient(135deg,#f09070,#e04c20 45%,#d43c10)"><svg width="19" height="19" viewBox="0 0 19 19" style="position:absolute;left:0;top:0"><path d="M5 5L14 14M14 5L5 14" stroke="#fff" stroke-width="2.2" stroke-linecap="round"/></svg></div>
 </div>
 <div class="bd">
<!--INFO--><svg class="abs" style="left:6px;top:6px" width="40" height="40" viewBox="0 0 40 40">
<defs><radialGradient id="ib" cx=".42" cy=".38" r=".65"><stop offset="0" stop-color="#ffffff"/><stop offset=".55" stop-color="#e4eefc"/><stop offset=".85" stop-color="#b4cdf0"/><stop offset="1" stop-color="#8fb0e4"/></radialGradient>
<filter id="ibl" x="-20%" y="-20%" width="140%" height="140%"><feGaussianBlur stdDeviation="0.9"/></filter></defs>
<g filter="url(#ibl)" opacity=".85"><ellipse cx="21.6" cy="19.2" rx="14.6" ry="12"/><path d="M19 28L25.6 37.2L26 28Z"/><g fill="#1c3c98"><ellipse cx="21.6" cy="19.2" rx="14.6" ry="12"/><path d="M19 28L25.6 37.2L26 28Z"/></g></g>
<path d="M17.2 28.6L24.3 35.8L24.6 28.6Z" fill="#a8c4ec"/>
<ellipse cx="20.2" cy="17.8" rx="14.8" ry="12.2" fill="url(#ib)"/>
<circle cx="20.2" cy="9.9" r="2.3" fill="#16389c"/>
<path d="M16.2 14.3H22.8V24.6H24.4V26H16.6V24.6H18.6V15.8H16.2Z" fill="#16389c"/>
</svg><!--/INFO-->
  <div class="abs" style="left:61px;top:21px;line-height:13px;white-space:nowrap">Поздравления! Теперь вы стали юзером!</div>
  <div class="btn def" style="left:103px;top:61px;width:73px;height:21px;line-height:21px">OK</div>
 </div>
</div>
<!--/D2-->

 </div>
</div>
</body>
</html>
